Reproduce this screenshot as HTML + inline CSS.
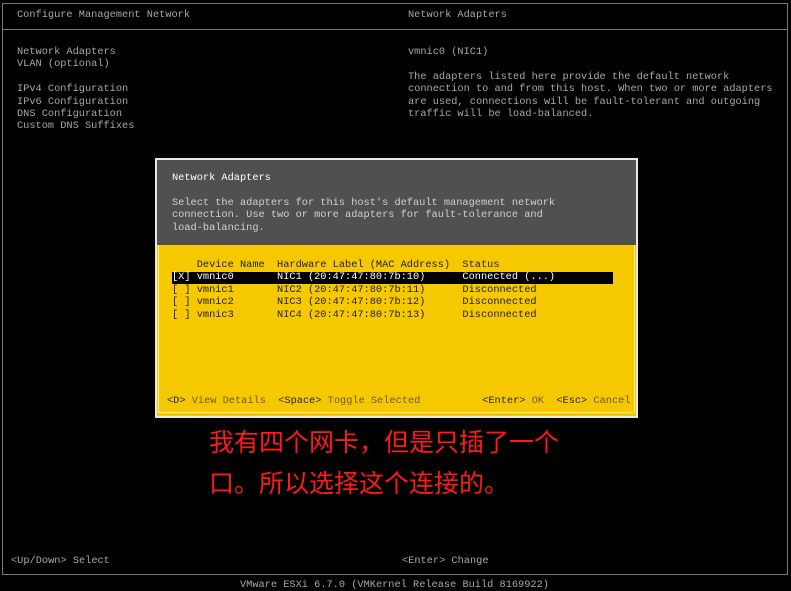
<!DOCTYPE html>
<html><head><meta charset="utf-8"><style>
*{margin:0;padding:0;box-sizing:border-box}
body{width:791px;height:589px;background:#000;position:relative;overflow:hidden;font-family:"Liberation Mono",monospace;font-size:10.3px;line-height:12.4px;color:#a8a8a8}
.a{position:absolute;white-space:pre}
.frame{position:absolute;left:2px;top:3px;width:786px;height:572px;border:1px solid #777}
.hl{position:absolute;left:2px;top:29px;width:786px;height:1px;background:#777}
.modal{position:absolute;left:155px;top:158px;width:483px;height:260px;background:#f6c800;border:2px solid #e8e8e8}
.head{position:absolute;left:0;top:0;width:479px;height:85px;background:#505050;border-bottom:0}
.inner{position:absolute;left:1px;top:85px;width:477px;height:168px;border:1px solid #fff0a0;border-top:0}
.sel{position:absolute;left:15px;top:112px;width:441px;height:12px;background:#000}
.cn{position:absolute;color:#ff1a1a;font-family:"Liberation Sans","Noto Sans CJK SC",sans-serif;font-size:25px;line-height:41px;left:209px;top:423px;white-space:pre}
</style></head><body>
<div class="frame"></div><div class="hl"></div>
<div class="a" style="left:17px;top:9px">Configure Management Network</div>
<div class="a" style="left:408px;top:9px">Network Adapters</div>
<div class="a" style="left:17px;top:46px">Network Adapters
VLAN (optional)

IPv4 Configuration
IPv6 Configuration
DNS Configuration
Custom DNS Suffixes</div>
<div class="a" style="left:408px;top:46px">vmnic0 (NIC1)

The adapters listed here provide the default network
connection to and from this host. When two or more adapters
are used, connections will be fault-tolerant and outgoing
traffic will be load-balanced.</div>
<div class="modal">
<div class="head"></div>
<div class="inner"></div>
<div class="a" style="left:15px;top:12px;color:#fff">Network Adapters</div>
<div class="a" style="left:15px;top:37px;color:#d0d0d0">Select the adapters for this host's default management network
connection. Use two or more adapters for fault-tolerance and
load-balancing.</div>
<div class="sel"></div>
<div class="a" style="left:15px;top:99px;color:#222">    Device Name  Hardware Label (MAC Address)  Status</div>
<div class="a" style="left:15px;top:111px;color:#fff">[X] vmnic0       NIC1 (20:47:47:80:7b:10)      Connected (...)</div>
<div class="a" style="left:15px;top:124px;color:#222">[ ] vmnic1       NIC2 (20:47:47:80:7b:11)      Disconnected
[ ] vmnic2       NIC3 (20:47:47:80:7b:12)      Disconnected
[ ] vmnic3       NIC4 (20:47:47:80:7b:13)      Disconnected</div>
<div class="a" style="left:10px;top:235px;color:#6b5a20"><span style="color:#222">&lt;D&gt;</span> View Details  <span style="color:#222">&lt;Space&gt;</span> Toggle Selected          <span style="color:#222">&lt;Enter&gt;</span> OK  <span style="color:#222">&lt;Esc&gt;</span> Cancel</div>
</div>
<div class="cn">我有四个网卡，但是只插了一个
口。所以选择这个连接的。</div>
<div class="a" style="left:11px;top:555px">&lt;Up/Down&gt; Select</div>
<div class="a" style="left:402px;top:555px">&lt;Enter&gt; Change</div>
<div class="a" style="left:240px;top:579px">VMware ESXi 6.7.0 (VMKernel Release Build 8169922)</div>
</body></html>
